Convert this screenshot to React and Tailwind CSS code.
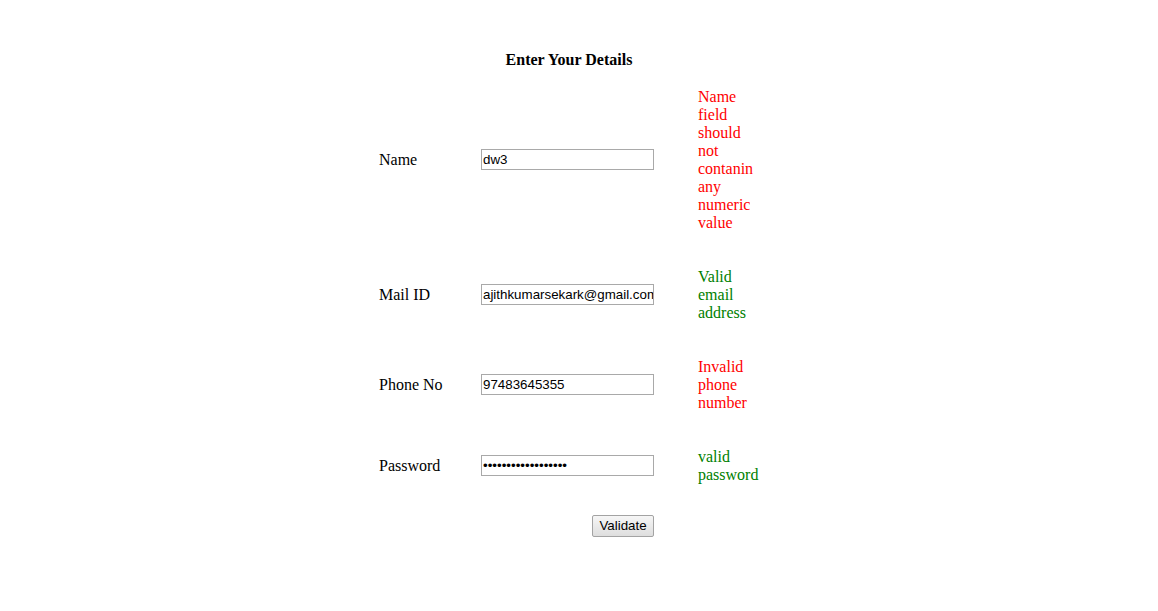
import React from 'react';

const rows = [
  { label: 'Name', type: 'text', value: 'dw3', msg: 'Name field should not contanin any numeric value', ok: false },
  { label: 'Mail ID', type: 'text', value: 'ajithkumarsekark@gmail.com', msg: 'Valid email address', ok: true },
  { label: 'Phone No', type: 'text', value: '97483645355', msg: 'Invalid phone number', ok: false },
  { label: 'Password', type: 'password', value: 'abcdefghijklmnopqr', msg: 'valid password', ok: true },
];

const App = () => {
  return (
    <div
      className="min-h-screen bg-white text-black text-[16px] leading-[18px] pt-[51px] pl-[379px]"
      style={{ fontFamily: '"Liberation Serif", "Times New Roman", serif' }}
    >
      <div className="w-[380px]">
        <h3 className="text-center font-bold leading-[18px]">Enter Your Details</h3>

        <div className="mt-[18px] flex flex-col gap-y-9">
          {rows.map((row) => (
            <div key={row.label} className="grid grid-cols-[102px_173px_44px_61px] items-center">
              <span className="translate-y-[1px]">{row.label}</span>
              <input
                type={row.type}
                defaultValue={row.value}
                readOnly
                className="w-[173px] h-[21px] border border-[#a9a9a9] bg-white pl-[1px] pr-0 text-[13.33px] text-black outline-none"
                style={{ fontFamily: '"Liberation Sans", Arial, sans-serif' }}
              />
              <span />
              <span className={`translate-y-[1px] ${row.ok ? 'text-[#008000]' : 'text-[#ff0000]'}`}>
                {row.msg}
              </span>
            </div>
          ))}
        </div>

        <div className="mt-8 w-[275px] flex justify-end">
          <button
            type="button"
            className="h-[22px] w-[62px] rounded-[2px] border border-[#a3a3a3] bg-gradient-to-b from-[#f6f6f6] to-[#dedede] text-[13.33px] text-black"
            style={{ fontFamily: '"Liberation Sans", Arial, sans-serif' }}
          >
            Validate
          </button>
        </div>
      </div>
    </div>
  );
};

export default App;
